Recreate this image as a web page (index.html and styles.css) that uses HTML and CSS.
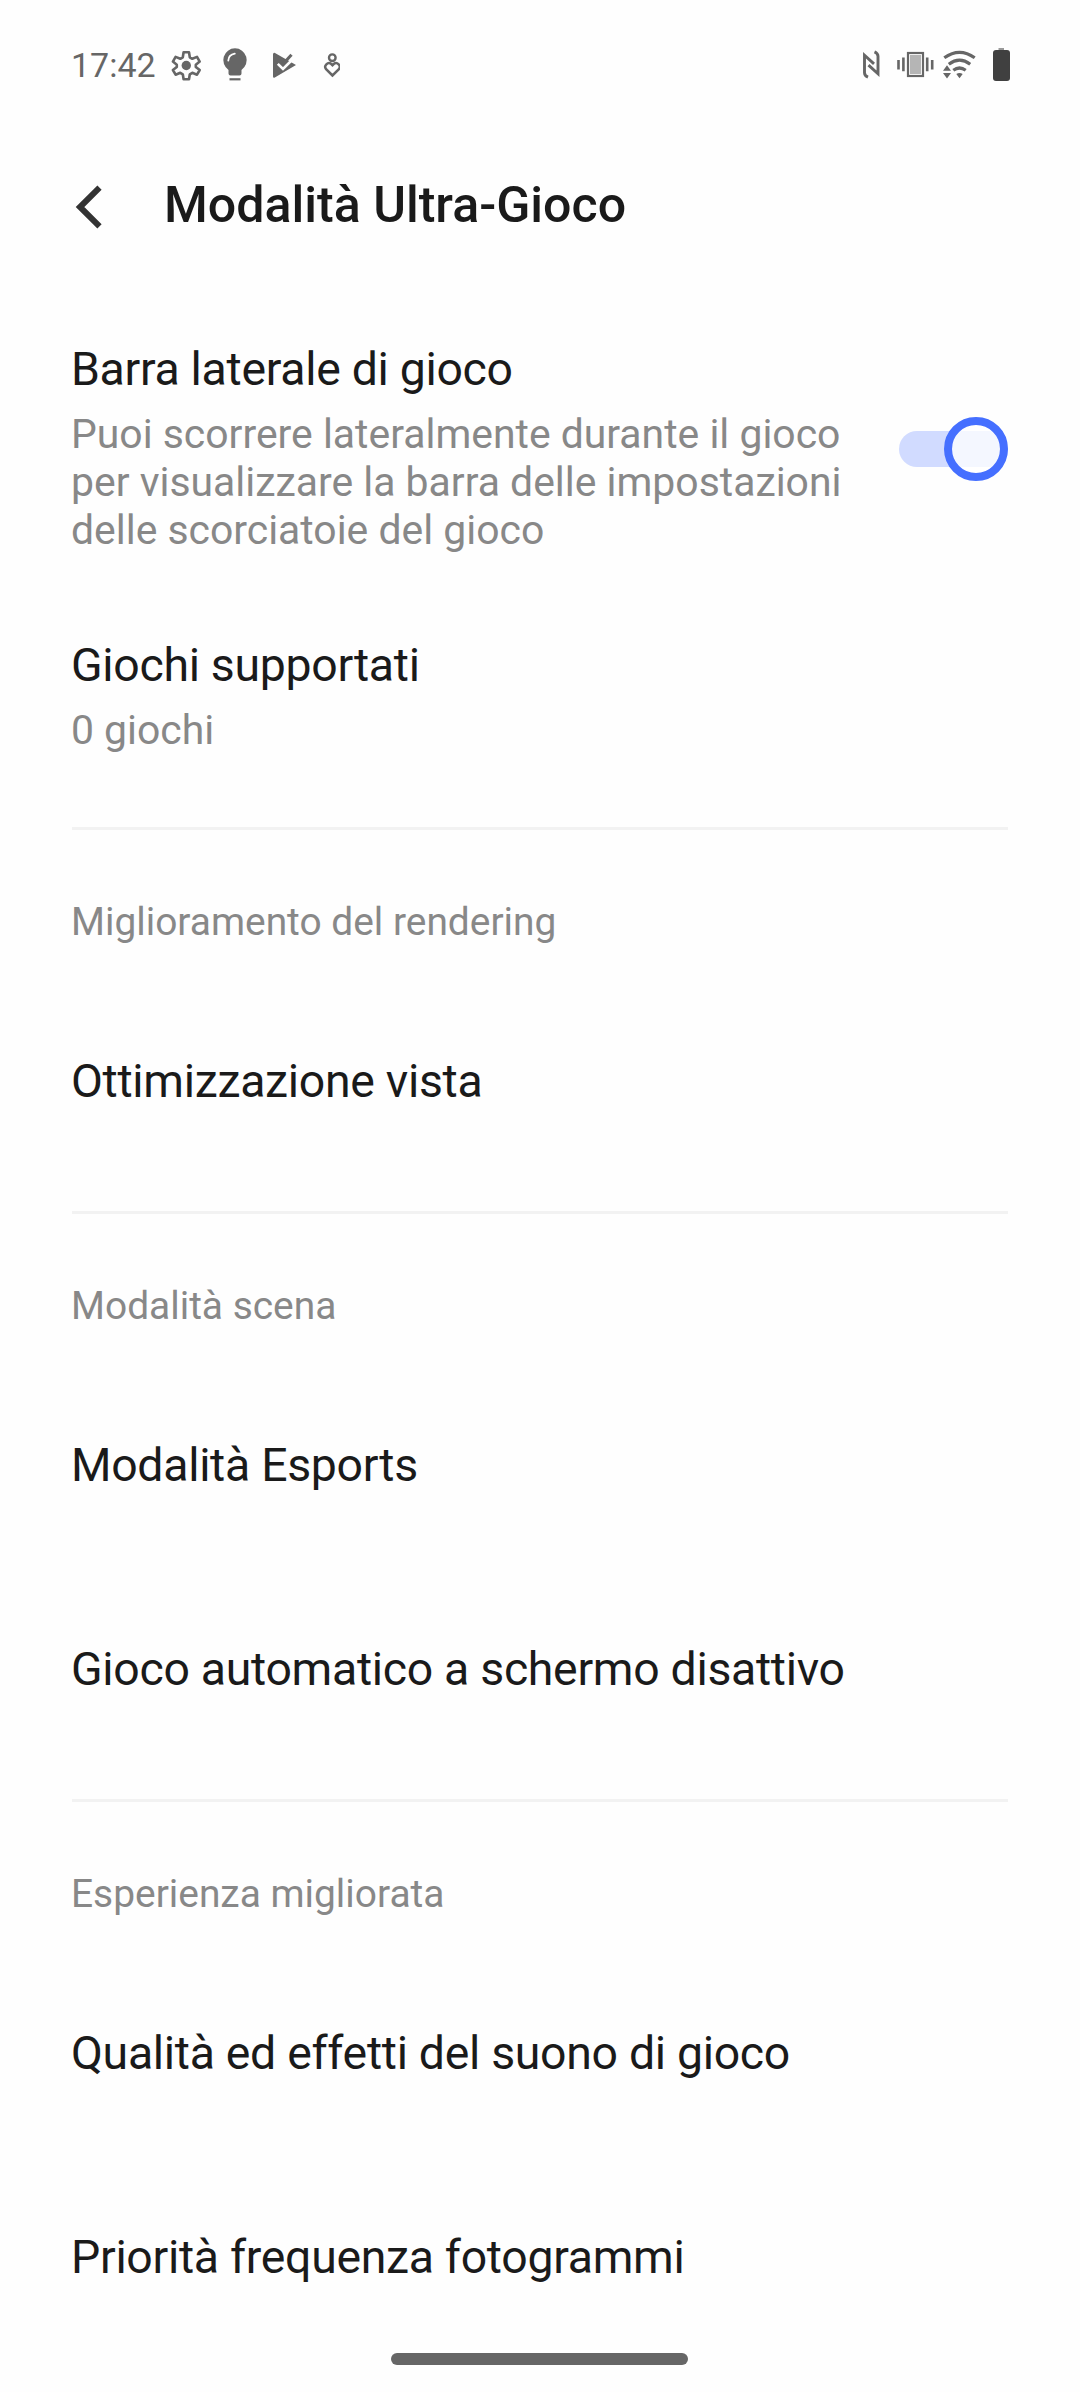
FILE: index.html
```html
<!DOCTYPE html>
<html lang="it">
  <head>
    <meta charset="UTF-8" />
    <meta name="viewport" content="width=device-width, initial-scale=1.0" />
    <title>Modalità Ultra-Gioco</title>
    <link rel="stylesheet" href="styles.css">
  </head>
  <body>
    <header class="status-bar">
      <span class="time">17:42</span>
      <svg class="status-left" width="180" height="60" viewBox="160 35 180 60">
        <!-- settings -->
        <path d="M182.800 57.300l.8-5h5.400l.8 5 2.500 1.500 4.700-1.900 2.700 4.700-3.900 3.100v2.200l3.900 3.100-2.700 4.700-4.700-1.900-2.500 1.500-.8 5h-5.400l-.8-5-2.500-1.500-4.700 1.900-2.700-4.700 3.900-3.100v-2.200l-3.900-3.100 2.700-4.700 4.700 1.900z" fill="none" stroke="#666" stroke-width="2.600" stroke-linejoin="round"/>
        <circle cx="186.300" cy="65.500" r="4.700" fill="#666"/>
        <!-- bulb -->
        <path d="M235 48.300a11.800 11.800 0 0 1 6.500 21.600v3.600q0 2-2 2h-9q-2 0-2-2v-3.600a11.800 11.800 0 0 1 6.500-21.600z" fill="#666"/>
        <path d="M228.300 60.500q.3-5.800 6.500-6.800" fill="none" stroke="#fff" stroke-width="1.800" stroke-linecap="round"/>
        <path d="M229.500 79.300h11" stroke="#666" stroke-width="2.200"/>
        <!-- play check -->
        <path d="M275 52.900l21 12.200-21.600 12.700q-1.400.3-1.400-1.300V54.300q.3-1.700 2-1.400z" fill="#666"/>
        <path d="M277.800 63.800l5.200 5.200 10.500-10.500" fill="none" stroke="#fefefe" stroke-width="2.600"/>
        <path d="M282.500 64.500l9-9.800" stroke="#666" stroke-width="3"/>
        <!-- person with heart -->
        <circle cx="332.300" cy="57.700" r="3.300" fill="none" stroke="#666" stroke-width="2.400"/>
        <path d="M332.500 75.500l-6.400-6.300a3.700 3.700 0 0 1 5.200-5.200l1.200 1.200 1.200-1.200a3.700 3.700 0 0 1 5.200 5.200z" fill="none" stroke="#666" stroke-width="2.500"/>
      </svg>
      <svg class="status-right" width="172" height="60" viewBox="855 35 172 60">
        <!-- nfc -->
        <path d="M868 77.200q-3.500-1.500-3.500-4.500V55.300l9.500 8.600M874.500 51.800q3.500 1.500 3.500 4.500v17.400l-9.500-8.600" fill="none" stroke="#666" stroke-width="2.900"/>
        <!-- vibrate -->
        <path d="M898.500 60v9.500M903.400 57.500v13.800M927.200 57.500v13.800M932.200 60v9.500" stroke="#666" stroke-width="2.600"/>
        <rect x="908" y="53" width="15" height="23" fill="none" stroke="#666" stroke-width="2.200"/>
        <rect x="910" y="55" width="11" height="19" fill="#b5b5b5"/>
        <!-- wifi -->
        <path d="M944.300 57.800q15.200-11 30.400 0M948.800 64.200q10.700-8.200 21.400 0M953.300 70.200q6.200-4.400 12.400 0" fill="none" stroke="#666" stroke-width="3.200"/>
        <path d="M956.300 74q3.200-2 6.400 0l-3.200 4.200zM943 70.800h8l-4-5.600zM943 73h8l-4 5.500z" fill="#666"/>
        <!-- battery -->
        <rect x="998.500" y="48" width="5.500" height="3" fill="#999"/>
        <rect x="993" y="50" width="17" height="31" rx="3" fill="#404040"/>
      </svg>
    </header>

    <div class="title-bar">
      <svg class="back" width="36" height="48" viewBox="72 183 36 48">
        <path d="M99.500 187.700L80 207l19.500 19.300" fill="none" stroke="#333" stroke-width="6"/>
      </svg>
      <h1 class="title">Modalità Ultra-Gioco</h1>
    </div>

    <main class="settings">
      <section class="group">
        <div class="item item-switch">
          <div class="item-text">
            <div class="item-title">Barra laterale di gioco</div>
            <div class="item-desc">Puoi scorrere lateralmente durante il gioco<br>per visualizzare la barra delle impostazioni<br>delle scorciatoie del gioco</div>
          </div>
          <div class="switch"><span class="thumb"></span></div>
        </div>
        <div class="item item-double">
          <div class="item-title">Giochi supportati</div>
          <div class="item-desc">0 giochi</div>
        </div>
      </section>

      <section class="group">
        <h2 class="group-title">Miglioramento del rendering</h2>
        <div class="item"><span class="item-title">Ottimizzazione vista</span></div>
      </section>

      <section class="group">
        <h2 class="group-title">Modalità scena</h2>
        <div class="item"><span class="item-title">Modalità Esports</span></div>
        <div class="item"><span class="item-title">Gioco automatico a schermo disattivo</span></div>
      </section>

      <section class="group">
        <h2 class="group-title">Esperienza migliorata</h2>
        <div class="item"><span class="item-title">Qualità ed effetti del suono di gioco</span></div>
        <div class="item"><span class="item-title">Priorità frequenza fotogrammi</span></div>
      </section>
    </main>

    <div class="home-bar"></div>
  </body>
</html>
```

FILE: styles.css
```css
* {
    box-sizing: border-box;
}

body {
    margin: 0;
    height: 2392px;
    padding: 0 72px;
    overflow: hidden;
    background-color: #fefefe;
    font-family: Roboto, sans-serif;
    color: #1a1a1a;
}

.status-bar {
    display: flex;
    align-items: center;
    height: 130px;
}

.time {
    width: 89px;
    margin-left: -1px;
    padding-bottom: 1px;
    font-size: 34px;
    line-height: 40px;
    color: #666666;
}

.status-right {
    margin-left: auto;
    margin-right: -19px;
}

.title-bar {
    display: flex;
    align-items: center;
    height: 154px;
    gap: 56px;
}

.title {
    margin: 0;
    padding-bottom: 4px;
    font-size: 50.1px;
    font-weight: 500;
    line-height: 60px;
}

.item {
    display: flex;
    align-items: center;
    height: 204px;
}

.item-title {
    margin-left: -1px;
    font-size: 46.4px;
    line-height: 53px;
    letter-spacing: -0.3px;
}

.item-desc {
    margin-top: 14px;
    margin-left: -1px;
    font-size: 40.9px;
    line-height: 48px;
    color: #888888;
}

.item-switch {
    justify-content: space-between;
    height: 329px;
}

.item-double {
    flex-direction: column;
    align-items: flex-start;
    height: 186px;
    padding-top: 26px;
}

.switch {
    width: 109px;
    height: 36px;
    margin-top: 1px;
    border-radius: 18px;
    background-color: #d1dbff;
}

.thumb {
    display: block;
    width: 64px;
    height: 64px;
    margin: -14px 0 0 45px;
    border: 8px solid #456fff;
    border-radius: 50%;
    background-color: rgba(255, 255, 255, 0.77);
    background-clip: padding-box;
}

.group + .group {
    margin-top: 28px;
    border-top: 3px solid #f2f2f2;
}

.group-title {
    display: flex;
    align-items: center;
    height: 149px;
    margin: 0 0 0 -1px;
    padding-top: 34px;
    font-size: 38.9px;
    font-weight: 400;
    color: #888888;
}

.home-bar {
    position: absolute;
    left: 391px;
    top: 2353px;
    width: 297px;
    height: 12px;
    border-radius: 6px;
    background-color: #666666;
}
```
